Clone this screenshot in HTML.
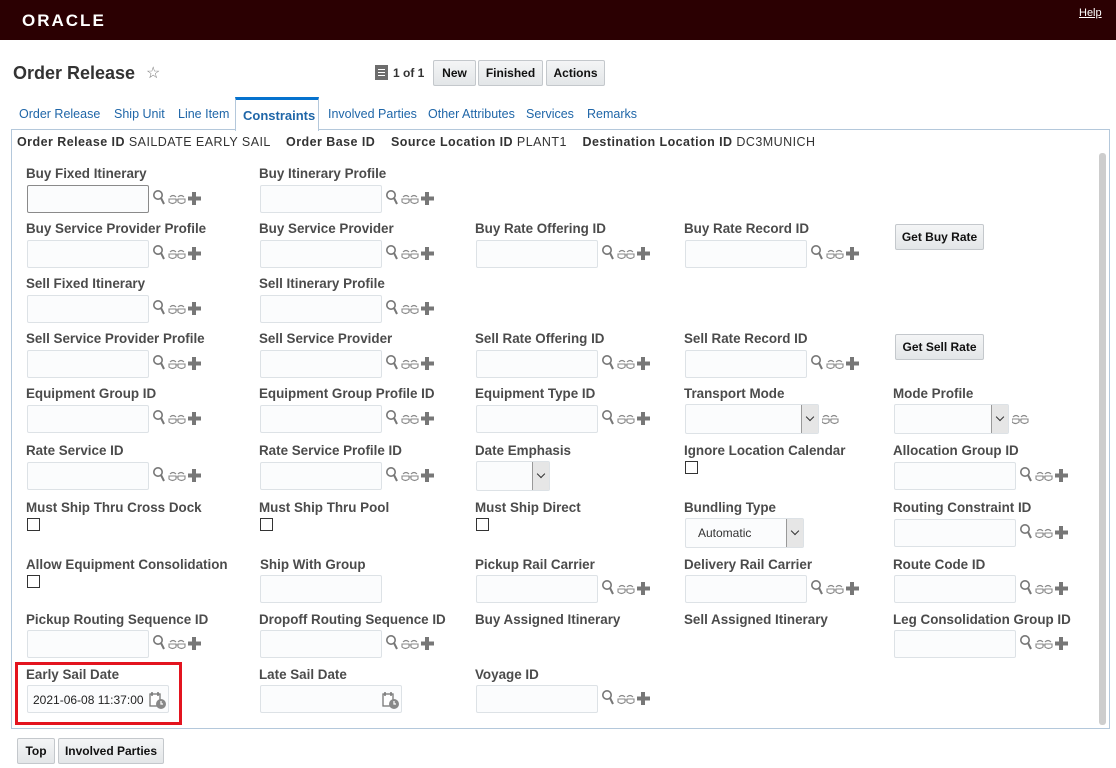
<!DOCTYPE html>
<html><head><meta charset="utf-8"><style>
*{box-sizing:border-box;margin:0;padding:0}
body{width:1116px;height:768px;background:#fff;font-family:"Liberation Sans",Arial,sans-serif;position:relative;overflow:hidden;color:#333}
.a{position:absolute}
.hdr{left:0;top:0;width:1116px;height:40px;background:#2b0002}
.l{position:absolute;font-weight:bold;font-size:13.4px;color:#4b4b4b;white-space:nowrap;line-height:16px}
.i{position:absolute;width:122px;height:28px;border:1px solid #dde2e6;background:#fbfcfd;border-radius:2px}
.ic{position:absolute;width:50px;height:18px}
.cb{position:absolute;width:13px;height:13px;border:1px solid #333;background:#fff}
.btn{position:absolute;height:26px;border:1px solid #c4c8cc;background:linear-gradient(#f4f5f6,#e3e6e8);font-weight:bold;font-size:12px;color:#111;text-align:center;line-height:24px;border-radius:2px}
.sel{position:absolute;height:30px;border:1px solid #dde2e6;background:#fbfcfd;border-radius:2px}
.sel .ar{position:absolute;right:0;top:0;width:17px;height:28px;border-left:1px solid #999;background:#e6e6e6}
.sel .ar:after{content:"";position:absolute;left:5px;top:9px;width:5px;height:5px;border-right:1px solid #333;border-bottom:1px solid #333;transform:rotate(45deg)}
.tab{position:absolute;top:107px;font-size:12.5px;color:#1f66a8}
</style></head><body>
<div class="a hdr"></div>
<div class="a" style="left:22px;top:11px;color:#fff;font-size:17px;font-weight:bold;letter-spacing:2px">ORACLE</div>
<div class="a" style="left:1079px;top:7px;color:#fff;font-size:11px;text-decoration:underline">Help</div>

<div class="a" style="left:13px;top:63px;font-size:18px;font-weight:bold;color:#333">Order Release</div>
<div class="a" style="left:146px;top:63px;font-size:16px;color:#777">☆</div>
<div class="a" style="left:375px;top:65px;width:13px;height:15px;background:#6d6d6d"></div>
<div class="a" style="left:378px;top:69px;width:7px;height:1px;background:#fff;box-shadow:0 3px 0 #fff,0 6px 0 #fff"></div>
<div class="a" style="left:393px;top:66px;font-size:12px;font-weight:bold;color:#333">1 of 1</div>
<div class="btn" style="left:433px;top:60px;width:43px">New</div>
<div class="btn" style="left:478px;top:60px;width:65px">Finished</div>
<div class="btn" style="left:546px;top:60px;width:59px">Actions</div>

<div class="tab" style="left:19px">Order Release</div>
<div class="tab" style="left:114px">Ship Unit</div>
<div class="tab" style="left:178px">Line Item</div>
<div class="a" style="left:235px;top:97px;width:84px;height:34px;border:1px solid #b4c8db;border-top:3px solid #0572ce;border-bottom:none;background:#fff;z-index:2"></div>
<div class="tab" style="left:243px;top:108px;font-size:13px;font-weight:bold;color:#1f66a8;z-index:3">Constraints</div>
<div class="tab" style="left:328px">Involved Parties</div>
<div class="tab" style="left:428px">Other Attributes</div>
<div class="tab" style="left:526px">Services</div>
<div class="tab" style="left:587px">Remarks</div>
<div class="a" style="left:11px;top:129px;width:1099px;height:600px;border:1px solid #b4c8db"></div>
<div class="a" style="left:1099px;top:153px;width:7px;height:572px;background:#cdcdcd;border-radius:3px"></div>
<div class="a" style="left:17px;top:135px;font-size:12.5px;color:#333;white-space:nowrap;letter-spacing:0.45px"><b>Order Release ID</b> SAILDATE EARLY SAIL &nbsp;&nbsp; <b>Order Base ID</b> &nbsp;&nbsp; <b>Source Location ID</b> PLANT1 &nbsp;&nbsp; <b>Destination Location ID</b> DC3MUNICH</div>

<svg width="0" height="0" style="position:absolute"><defs><g id="ico">
<circle cx="5" cy="5" r="4.2" fill="none" stroke="#777" stroke-width="1.6"/><path d="M8 8 L11 14" stroke="#777" stroke-width="2"/>
<path d="M17 7 q3-3 6 0 M25 7 q3-3 6 0 M16 9 h7 v3 q-3.5 3 -7 0z M25 9 h7 v3 q-3.5 3 -7 0z M23 10 h2" fill="none" stroke="#888" stroke-width="1.1"/>
<path d="M41 2 v13 M35 8.5 h13" stroke="#777" stroke-width="4"/>
</g><g id="gl"><path d="M1 7 q3-3 6 0 M9 7 q3-3 6 0 M0 9 h7 v3 q-3.5 3 -7 0z M9 9 h7 v3 q-3.5 3 -7 0z M7 10 h2" fill="none" stroke="#888" stroke-width="1.1"/></g>
<g id="cal"><rect x="1" y="3" width="10" height="12" fill="#fff" stroke="#777" stroke-width="1.3"/><path d="M3 1v4M9 1v4" stroke="#777" stroke-width="1.5"/><circle cx="12" cy="13" r="5" fill="#888"/><path d="M12 10v3h2" stroke="#fff" stroke-width="1.2" fill="none"/></g></defs></svg>

<!-- Row 1 -->
<div class="l" style="left:26px;top:166px">Buy Fixed Itinerary</div>
<div class="i" style="left:27px;top:185px;border-color:#8a8a8a"></div><svg class="ic" style="left:153px;top:190px"><use href="#ico"/></svg>
<div class="l" style="left:259px;top:166px">Buy Itinerary Profile</div>
<div class="i" style="left:260px;top:185px"></div><svg class="ic" style="left:386px;top:190px"><use href="#ico"/></svg>
<!-- Row 2 -->
<div class="l" style="left:26px;top:221px">Buy Service Provider Profile</div>
<div class="i" style="left:27px;top:240px"></div><svg class="ic" style="left:153px;top:245px"><use href="#ico"/></svg>
<div class="l" style="left:259px;top:221px">Buy Service Provider</div>
<div class="i" style="left:260px;top:240px"></div><svg class="ic" style="left:386px;top:245px"><use href="#ico"/></svg>
<div class="l" style="left:475px;top:221px">Buy Rate Offering ID</div>
<div class="i" style="left:476px;top:240px"></div><svg class="ic" style="left:602px;top:245px"><use href="#ico"/></svg>
<div class="l" style="left:684px;top:221px">Buy Rate Record ID</div>
<div class="i" style="left:685px;top:240px"></div><svg class="ic" style="left:811px;top:245px"><use href="#ico"/></svg>
<div class="btn" style="left:895px;top:224px;width:89px">Get Buy Rate</div>
<!-- Row 3 -->
<div class="l" style="left:26px;top:276px">Sell Fixed Itinerary</div>
<div class="i" style="left:27px;top:295px"></div><svg class="ic" style="left:153px;top:300px"><use href="#ico"/></svg>
<div class="l" style="left:259px;top:276px">Sell Itinerary Profile</div>
<div class="i" style="left:260px;top:295px"></div><svg class="ic" style="left:386px;top:300px"><use href="#ico"/></svg>
<!-- Row 4 -->
<div class="l" style="left:26px;top:331px">Sell Service Provider Profile</div>
<div class="i" style="left:27px;top:350px"></div><svg class="ic" style="left:153px;top:355px"><use href="#ico"/></svg>
<div class="l" style="left:259px;top:331px">Sell Service Provider</div>
<div class="i" style="left:260px;top:350px"></div><svg class="ic" style="left:386px;top:355px"><use href="#ico"/></svg>
<div class="l" style="left:475px;top:331px">Sell Rate Offering ID</div>
<div class="i" style="left:476px;top:350px"></div><svg class="ic" style="left:602px;top:355px"><use href="#ico"/></svg>
<div class="l" style="left:684px;top:331px">Sell Rate Record ID</div>
<div class="i" style="left:685px;top:350px"></div><svg class="ic" style="left:811px;top:355px"><use href="#ico"/></svg>
<div class="btn" style="left:895px;top:334px;width:89px">Get Sell Rate</div>
<!-- Row 5 -->
<div class="l" style="left:26px;top:386px">Equipment Group ID</div>
<div class="i" style="left:27px;top:405px"></div><svg class="ic" style="left:153px;top:410px"><use href="#ico"/></svg>
<div class="l" style="left:259px;top:386px">Equipment Group Profile ID</div>
<div class="i" style="left:260px;top:405px"></div><svg class="ic" style="left:386px;top:410px"><use href="#ico"/></svg>
<div class="l" style="left:475px;top:386px">Equipment Type ID</div>
<div class="i" style="left:476px;top:405px"></div><svg class="ic" style="left:602px;top:410px"><use href="#ico"/></svg>
<div class="l" style="left:684px;top:386px">Transport Mode</div>
<div class="sel" style="left:685px;top:404px;width:134px"><div class="ar"></div></div><svg class="ic" style="left:822px;top:410px"><use href="#gl"/></svg>
<div class="l" style="left:893px;top:386px">Mode Profile</div>
<div class="sel" style="left:894px;top:404px;width:115px"><div class="ar"></div></div><svg class="ic" style="left:1012px;top:410px"><use href="#gl"/></svg>
<!-- Row 6 -->
<div class="l" style="left:26px;top:443px">Rate Service ID</div>
<div class="i" style="left:27px;top:462px"></div><svg class="ic" style="left:153px;top:467px"><use href="#ico"/></svg>
<div class="l" style="left:259px;top:443px">Rate Service Profile ID</div>
<div class="i" style="left:260px;top:462px"></div><svg class="ic" style="left:386px;top:467px"><use href="#ico"/></svg>
<div class="l" style="left:475px;top:443px">Date Emphasis</div>
<div class="sel" style="left:476px;top:461px;width:74px"><div class="ar"></div></div>
<div class="l" style="left:684px;top:443px">Ignore Location Calendar</div>
<div class="cb" style="left:685px;top:461px"></div>
<div class="l" style="left:893px;top:443px">Allocation Group ID</div>
<div class="i" style="left:894px;top:462px"></div><svg class="ic" style="left:1020px;top:467px"><use href="#ico"/></svg>
<!-- Row 7 -->
<div class="l" style="left:26px;top:500px">Must Ship Thru Cross Dock</div>
<div class="cb" style="left:27px;top:518px"></div>
<div class="l" style="left:259px;top:500px">Must Ship Thru Pool</div>
<div class="cb" style="left:260px;top:518px"></div>
<div class="l" style="left:475px;top:500px">Must Ship Direct</div>
<div class="cb" style="left:476px;top:518px"></div>
<div class="l" style="left:684px;top:500px">Bundling Type</div>
<div class="sel" style="left:685px;top:518px;width:119px"><span style="position:absolute;left:12px;top:7px;font-size:12px;color:#333">Automatic</span><div class="ar"></div></div>
<div class="l" style="left:893px;top:500px">Routing Constraint ID</div>
<div class="i" style="left:894px;top:519px"></div><svg class="ic" style="left:1020px;top:524px"><use href="#ico"/></svg>
<!-- Row 8 -->
<div class="l" style="left:26px;top:557px">Allow Equipment Consolidation</div>
<div class="cb" style="left:27px;top:575px"></div>
<div class="l" style="left:260px;top:557px">Ship With Group</div>
<div class="i" style="left:260px;top:575px"></div>
<div class="l" style="left:475px;top:557px">Pickup Rail Carrier</div>
<div class="i" style="left:476px;top:575px"></div><svg class="ic" style="left:602px;top:580px"><use href="#ico"/></svg>
<div class="l" style="left:684px;top:557px">Delivery Rail Carrier</div>
<div class="i" style="left:685px;top:575px"></div><svg class="ic" style="left:811px;top:580px"><use href="#ico"/></svg>
<div class="l" style="left:893px;top:557px">Route Code ID</div>
<div class="i" style="left:894px;top:575px"></div><svg class="ic" style="left:1020px;top:580px"><use href="#ico"/></svg>
<!-- Row 9 -->
<div class="l" style="left:26px;top:612px">Pickup Routing Sequence ID</div>
<div class="i" style="left:27px;top:630px"></div><svg class="ic" style="left:153px;top:635px"><use href="#ico"/></svg>
<div class="l" style="left:259px;top:612px">Dropoff Routing Sequence ID</div>
<div class="i" style="left:260px;top:630px"></div><svg class="ic" style="left:386px;top:635px"><use href="#ico"/></svg>
<div class="l" style="left:475px;top:612px">Buy Assigned Itinerary</div>
<div class="l" style="left:684px;top:612px">Sell Assigned Itinerary</div>
<div class="l" style="left:893px;top:612px">Leg Consolidation Group ID</div>
<div class="i" style="left:894px;top:630px"></div><svg class="ic" style="left:1020px;top:635px"><use href="#ico"/></svg>
<!-- Row 10 -->
<div class="l" style="left:26px;top:667px">Early Sail Date</div>
<div class="i" style="left:27px;top:685px;width:142px"><span style="position:absolute;left:5px;top:7px;font-size:12px;color:#222">2021-06-08 11:37:00</span></div>
<svg style="position:absolute;left:149px;top:691px" width="18" height="18"><use href="#cal"/></svg>
<div class="a" style="left:15px;top:662px;width:167px;height:63px;border:3px solid #e3141f"></div>
<div class="l" style="left:259px;top:667px">Late Sail Date</div>
<div class="i" style="left:260px;top:685px;width:142px"></div>
<svg style="position:absolute;left:382px;top:691px" width="18" height="18"><use href="#cal"/></svg>
<div class="l" style="left:475px;top:667px">Voyage ID</div>
<div class="i" style="left:476px;top:685px"></div><svg class="ic" style="left:602px;top:690px"><use href="#ico"/></svg>

<div class="btn" style="left:17px;top:738px;width:38px">Top</div>
<div class="btn" style="left:58px;top:738px;width:106px">Involved Parties</div>
</body></html>
